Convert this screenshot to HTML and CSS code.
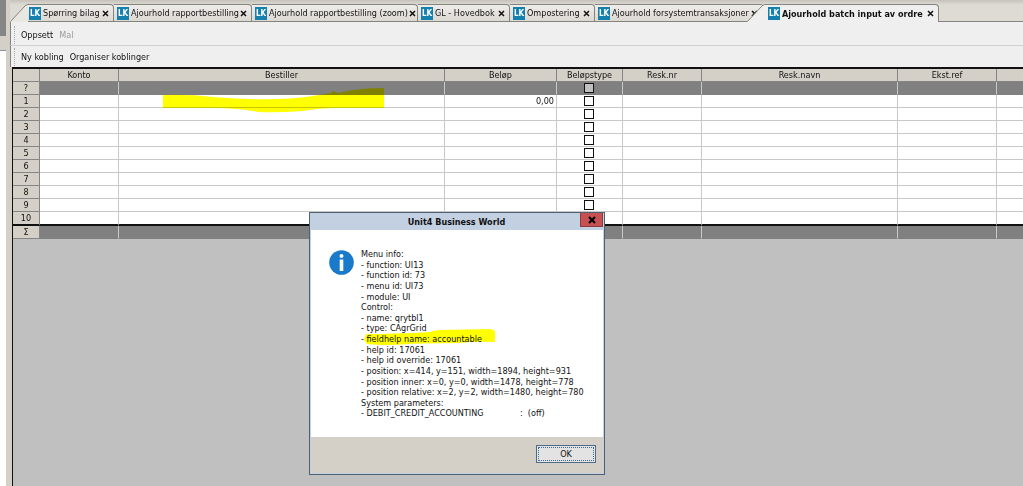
FILE: index.html
```html
<!DOCTYPE html>
<html lang="no">
<head>
<meta charset="utf-8">
<title>Unit4 Business World</title>
<link rel="stylesheet" href="styles.css">
</head>
<body>
<div class="app">
  <aside class="edge"><div class="edge-dark"></div><div class="edge-beige"></div></aside>
  <main class="window">
    <nav class="tabs">
      <svg class="slope" width="18" height="18" viewBox="0 0 18 18"><path d="M0 18 14 3Q16 .5 18 .5V18Z" fill="#e9e7e2"/><path d="M.5 17.5 14 3Q16 .5 18 .5" fill="none" stroke="#85857f"/></svg>
      <div class="tab tab-first"><span class="logo">LK</span><span>Spørring bilag</span><button class="close" aria-label="Lukk"><svg width="7" height="7" viewBox="0 0 7 7"><path d="M1 1 6 6M6 1 1 6"/></svg></button></div>
      <div class="tab tab-report"><span class="logo">LK</span><span>Ajourhold rapportbestilling</span><button class="close" aria-label="Lukk"><svg width="7" height="7" viewBox="0 0 7 7"><path d="M1 1 6 6M6 1 1 6"/></svg></button></div>
      <div class="tab tab-zoom"><span class="logo">LK</span><span>Ajourhold rapportbestilling (zoom)</span><button class="close" aria-label="Lukk"><svg width="7" height="7" viewBox="0 0 7 7"><path d="M1 1 6 6M6 1 1 6"/></svg></button></div>
      <div class="tab tab-ledger"><span class="logo">LK</span><span>GL - Hovedbok</span><button class="close" aria-label="Lukk"><svg width="7" height="7" viewBox="0 0 7 7"><path d="M1 1 6 6M6 1 1 6"/></svg></button></div>
      <div class="tab tab-repost"><span class="logo">LK</span><span>Ompostering</span><button class="close" aria-label="Lukk"><svg width="7" height="7" viewBox="0 0 7 7"><path d="M1 1 6 6M6 1 1 6"/></svg></button></div>
      <div class="tab tab-system"><span class="logo">LK</span><span>Ajourhold forsystemtransaksjoner</span><button class="close" aria-label="Lukk"><svg width="7" height="7" viewBox="0 0 7 7"><path d="M1 1 6 6M6 1 1 6"/></svg></button></div>
      <svg class="slope slope-active" width="18" height="18" viewBox="0 0 18 18"><path d="M0 18 14 3Q16 .5 18 .5V18Z" fill="#efefef"/><path d="M.5 17.5 14 3Q16 .5 18 .5" fill="none" stroke="#85857f"/></svg>
      <div class="tab tab-active"><span class="logo">LK</span><span>Ajourhold batch input av ordre</span><button class="close" aria-label="Lukk"><svg width="7" height="7" viewBox="0 0 7 7"><path d="M1 1 6 6M6 1 1 6"/></svg></button></div>
      <div class="tabs-rest"></div>
    </nav>
    <div class="toolbar"><button>Oppsett</button><button disabled>Mal</button></div>
    <div class="toolbar toolbar-links"><button>Ny kobling</button><button>Organiser koblinger</button></div>
    <div class="grid">
      <table>
        <colgroup><col class="c-head"><col class="c-konto"><col class="c-bestiller"><col class="c-belop"><col class="c-type"><col class="c-resknr"><col class="c-navn"><col class="c-ref"><col></colgroup>
        <thead><tr><th></th><th>Konto</th><th>Bestiller</th><th>Beløp</th><th>Beløpstype</th><th>Resk.nr</th><th>Resk.navn</th><th>Ekst.ref</th><th></th></tr></thead>
        <tbody>
          <tr class="gray"><th>?</th><td></td><td></td><td></td><td class="tick"><input type="checkbox" aria-label="Beløpstype søk"></td><td></td><td></td><td></td><td></td></tr>
          <tr><th>1</th><td></td><td></td><td class="num">0,00</td><td class="tick"><input type="checkbox" aria-label="Beløpstype 1"></td><td></td><td></td><td></td><td></td></tr>
          <tr><th>2</th><td></td><td></td><td></td><td class="tick"><input type="checkbox" aria-label="Beløpstype 2"></td><td></td><td></td><td></td><td></td></tr>
          <tr><th>3</th><td></td><td></td><td></td><td class="tick"><input type="checkbox" aria-label="Beløpstype 3"></td><td></td><td></td><td></td><td></td></tr>
          <tr><th>4</th><td></td><td></td><td></td><td class="tick"><input type="checkbox" aria-label="Beløpstype 4"></td><td></td><td></td><td></td><td></td></tr>
          <tr><th>5</th><td></td><td></td><td></td><td class="tick"><input type="checkbox" aria-label="Beløpstype 5"></td><td></td><td></td><td></td><td></td></tr>
          <tr><th>6</th><td></td><td></td><td></td><td class="tick"><input type="checkbox" aria-label="Beløpstype 6"></td><td></td><td></td><td></td><td></td></tr>
          <tr><th>7</th><td></td><td></td><td></td><td class="tick"><input type="checkbox" aria-label="Beløpstype 7"></td><td></td><td></td><td></td><td></td></tr>
          <tr><th>8</th><td></td><td></td><td></td><td class="tick"><input type="checkbox" aria-label="Beløpstype 8"></td><td></td><td></td><td></td><td></td></tr>
          <tr><th>9</th><td></td><td></td><td></td><td class="tick"><input type="checkbox" aria-label="Beløpstype 9"></td><td></td><td></td><td></td><td></td></tr>
          <tr class="last"><th>10</th><td></td><td></td><td></td><td class="tick"><input type="checkbox" aria-label="Beløpstype 10"></td><td></td><td></td><td></td><td></td></tr>
        </tbody>
        <tfoot><tr class="gray"><th>Σ</th><td></td><td></td><td></td><td></td><td></td><td></td><td></td><td></td></tr></tfoot>
      </table>
      <svg class="marker marker-grid" width="222" height="28" viewBox="0 0 222 28"><path d="M0 8Q25 7 50 10Q110 15 150 9L168 6L170 4L175 6Q195 1 221 1V21H176Q155 21 140 24Q115 26 95 25Q75 21 50 21H0Z" fill="#ff0"/></svg>
    </div>
  </main>
  <section class="dialog" role="dialog" aria-labelledby="dialog-title">
    <header class="titlebar"><h1 id="dialog-title">Unit4 Business World</h1><button class="dialog-close" aria-label="Lukk"><svg width="8" height="8" viewBox="0 0 8 8"><path d="M1 1 7 7M7 1 1 7" stroke="#000" stroke-width="2"/></svg></button></header>
    <div class="message">
      <svg class="info" width="25" height="25" viewBox="0 0 25 25"><circle cx="12.500" cy="12.500" r="12.300" fill="#1979ca"/><circle cx="12.500" cy="6" r="2" fill="#fff"/><path d="M10.700 9.500h3.600v11.500h-3.600z" fill="#fff"/></svg>
      <div class="info-text">
        <p>Menu info:</p><p>- function: UI13</p><p>- function id: 73</p><p>- menu id: UI73</p><p>- module: UI</p>
        <p>Control:</p><p>- name: qrytbl1</p><p>- type: CAgrGrid</p>
        <p class="marked">- fieldhelp name: accountable<svg class="marker marker-line" width="132" height="17" viewBox="0 0 132 17"><path d="M2 5Q30 5 66 3Q70 1 76 1L126 0Q131 1 131 3V13Q110 12 96 14Q60 14 45 15Q20 17 3 15L0 11Z" fill="#ff0"/></svg></p>
        <p>- help id: 17061</p><p>- help id override: 17061</p><p>- position: x=414, y=151, width=1894, height=931</p><p>- position inner: x=0, y=0, width=1478, height=778</p><p>- position relative: x=2, y=2, width=1480, height=780</p>
        <p>System parameters:</p><p class="param"><span>- DEBIT_CREDIT_ACCOUNTING</span><span>:&nbsp; (off)</span></p>
      </div>
    </div>
    <footer class="actions"><button class="ok">OK</button></footer>
  </section>
</div>
</body>
</html>
```
FILE: styles.css
```css
* { box-sizing: border-box; }
body {
  margin: 0;
  background: #c0c0c0;
  color: #111;
  font: 9px/12px "DejaVu Sans Condensed", "DejaVu Sans", sans-serif;
}
button { margin: 0; padding: 0; border: 0; background: none; color: inherit; font: inherit; }
.app { position: relative; display: flex; min-height: 100vh; overflow: hidden; }
.edge { display: flex; flex-direction: column; flex: none; width: 6px; background: #fff; }
.edge-dark { height: 36px; background: #858585; }
.edge-beige { height: 15px; background: #d4d0c8; border-bottom: 1px solid #8a93a0; }
.window { display: flex; flex-direction: column; flex: 1; min-width: 0; padding-left: 4px; background: #d4d0c8; }

.tabs { display: flex; height: 22px; padding-top: 4px; background: linear-gradient(#c6c2bb, #dedbd5 5px); }
.slope { flex: none; }
.slope-active { margin-left: -17px; }
.tab {
  display: flex; align-items: center; flex: none;
  padding: 0 1px 0 3px; white-space: nowrap;
  border: solid #85857f; border-width: 1px 1px 1px 0; border-radius: 0 4px 0 0;
  background: linear-gradient(#efedea, #dcd9d3);
}
.tab-first { width: 86px; padding: 0 4px 0 1px; }
.tab-report { width: 138px; padding-right: 4px; }
.tab-zoom { width: 166px; }
.tab-ledger { width: 92px; padding-right: 4px; }
.tab-repost { width: 85px; padding-right: 4px; }
.tab-system { width: 169px; padding-right: 6px; border-right: 0; }
.tab-active { width: 174px; padding-right: 4px; border-bottom: 0; background: #efefef; font-weight: bold; }
.tabs-rest { flex: 1; border-bottom: 1px solid #85857f; }
.logo {
  flex: none; width: 12px; height: 13px; margin-right: 2px; background: #1580ae; color: #fff;
  font: bold 8px/13px "DejaVu Sans Condensed", sans-serif; text-align: center;
}
.close { display: flex; margin-left: auto; }
.close path { fill: none; stroke: #111; stroke-width: 1.5; }

.toolbar {
  display: flex; align-items: center; gap: 6px; height: 24px; padding: 2px 0 0 11px;
  background: #efefef; border-left: 1px solid #85857f; border-bottom: 1px solid #cfcfcf;
}
.toolbar::before { content: ""; width: 1px; height: 18px; margin: 0 -1px 0 -8px; border-left: 1px dotted #aaa; }
.toolbar button:disabled { color: #999; }
.toolbar-links { height: 21px; padding-top: 0; border-bottom: 0; }

.grid { position: relative; flex: 1; margin-left: 2px; background: #c0c0c0; border: solid #111; border-width: 2px 0 0 1px; }
table { width: 100%; table-layout: fixed; border-collapse: separate; border-spacing: 0; }
.c-head { width: 27px; }
.c-konto { width: 79px; }
.c-bestiller { width: 326px; }
.c-belop { width: 112px; }
.c-type { width: 66px; }
.c-resknr { width: 79px; }
.c-navn { width: 196px; }
.c-ref { width: 99px; }
th, td { height: 13px; padding: 1px 0 0; font-weight: normal; line-height: 11px; white-space: nowrap; }
th { background: #d4d0c8; border: solid #858585; border-width: 0 1px 1px 0; text-align: center; }
td { background: #fff; border: solid #c8c8c8; border-width: 0 1px 1px 0; }
th:last-child, td:last-child { border-right: 0; }
.gray td { background: #808080; border-bottom-color: #808080; }
.last th, .last td { height: 14px; border-bottom: 2px solid #111; }
.num { padding-right: 2px; text-align: right; }
.tick { padding: 0 1px 0 0; }
.tick input {
  display: block; appearance: none; width: 10px; height: 10px; margin: 0 auto;
  border: 1px solid #111; background: #fff;
}
.gray .tick input { background: #c0c0c0; }
.marker { position: absolute; mix-blend-mode: multiply; pointer-events: none; }
.marker-grid { left: 150px; top: 18px; }

.dialog {
  position: absolute; left: 309px; top: 212px; width: 296px;
  border: 1px solid #4f6073; background: #c2d0e2;
}
.titlebar { display: flex; height: 17px; padding-left: 23px; }
.titlebar h1 { flex: 1; margin: 0; padding-top: 3px; font-size: 9px; line-height: 12px; text-align: center; }
.dialog-close { display: flex; align-items: center; justify-content: center; width: 23px; height: 14px; margin-right: 1px; background: #c75050; border: 1px solid #8a3b3b; border-top: 0; }
.message { display: flex; gap: 7px; margin: 0 1px; padding: 19px 8px 18px 18px; background: #fff; }
.info { flex: none; margin-top: 1px; }
.info-text { display: grid; grid-auto-rows: 1fr; flex: 1; height: 170px; line-height: 10px; }
.info-text p { margin: 0; white-space: nowrap; }
.marked { position: relative; }
.marker-line { left: 3px; top: -5px; }
.param { display: grid; grid-template-columns: 159px auto; }
.actions { display: flex; justify-content: flex-end; margin: 0 1px 1px; padding: 8px 7px 10px; background: #d4d0c8; }
.ok { width: 60px; height: 18px; background: #e3e3e3; border: 1px solid #4c6c8c; outline: 1px dotted #486a90; outline-offset: -3px; }
```
